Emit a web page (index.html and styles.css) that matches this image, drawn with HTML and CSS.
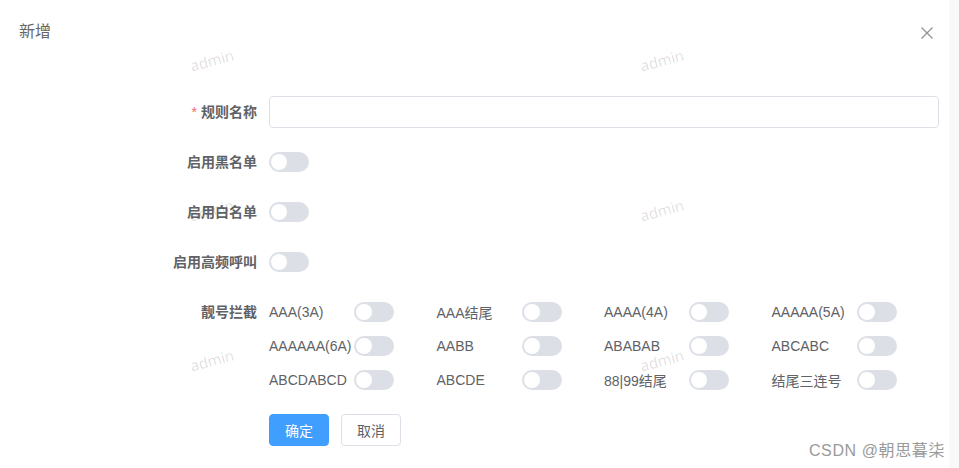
FILE: index.html
```html
<!DOCTYPE html>
<html lang="zh">
<head>
<meta charset="utf-8">
<title>新增</title>
<link rel="stylesheet" href="styles.css">
</head>
<body>
<div class="dialog">
  <div class="header">
    <span class="title">新增</span>
    <button class="close" aria-label="关闭">
      <svg width="12" height="12" viewBox="0 0 12 12"><path d="M0.5 0.5L11.5 11.5M11.5 0.5L0.5 11.5" stroke="#909399" stroke-width="1.3" fill="none"/></svg>
    </button>
  </div>
  <form class="form">
    <div class="item">
      <label class="label"><span class="req">*</span>规则名称</label>
      <div class="content"><input class="input" type="text"></div>
    </div>
    <div class="item">
      <label class="label">启用黑名单</label>
      <div class="content"><span class="switch"><span class="knob"></span></span></div>
    </div>
    <div class="item">
      <label class="label">启用白名单</label>
      <div class="content"><span class="switch"><span class="knob"></span></span></div>
    </div>
    <div class="item">
      <label class="label">启用高频呼叫</label>
      <div class="content"><span class="switch"><span class="knob"></span></span></div>
    </div>
    <div class="item">
      <label class="label">靓号拦截</label>
      <div class="content">
        <div class="grid">
          <div class="cell"><span class="ctext">AAA(3A)</span><span class="switch"><span class="knob"></span></span></div>
          <div class="cell"><span class="ctext">AAA结尾</span><span class="switch"><span class="knob"></span></span></div>
          <div class="cell"><span class="ctext">AAAA(4A)</span><span class="switch"><span class="knob"></span></span></div>
          <div class="cell"><span class="ctext">AAAAA(5A)</span><span class="switch"><span class="knob"></span></span></div>
          <div class="cell"><span class="ctext">AAAAAA(6A)</span><span class="switch"><span class="knob"></span></span></div>
          <div class="cell"><span class="ctext">AABB</span><span class="switch"><span class="knob"></span></span></div>
          <div class="cell"><span class="ctext">ABABAB</span><span class="switch"><span class="knob"></span></span></div>
          <div class="cell"><span class="ctext">ABCABC</span><span class="switch"><span class="knob"></span></span></div>
          <div class="cell"><span class="ctext">ABCDABCD</span><span class="switch"><span class="knob"></span></span></div>
          <div class="cell"><span class="ctext">ABCDE</span><span class="switch"><span class="knob"></span></span></div>
          <div class="cell"><span class="ctext">88|99结尾</span><span class="switch"><span class="knob"></span></span></div>
          <div class="cell"><span class="ctext">结尾三连号</span><span class="switch"><span class="knob"></span></span></div>
        </div>
      </div>
    </div>
    <div class="item">
      <span class="label"></span>
      <div class="content buttons">
        <button type="button" class="btn primary">确定</button>
        <button type="button" class="btn">取消</button>
      </div>
    </div>
  </form>
  <div class="watermarks" aria-hidden="true">
    <span class="wm">admin</span><span class="wm">admin</span>
    <span class="wm">admin</span><span class="wm">admin</span>
    <span class="wm">admin</span><span class="wm">admin</span>
  </div>
</div>
<div class="csdn">CSDN @朝思暮柒</div>
</body>
</html>
```
FILE: styles.css
```css
* { box-sizing: border-box; }
html, body { margin: 0; padding: 0; }
body {
  position: relative;
  background: #f9f9fa;
  font-family: "Liberation Sans", "Noto Sans CJK SC", sans-serif;
  width: 959px;
  height: 468px;
  overflow: hidden;
}
.dialog {
  position: relative;
  width: 949px;
  height: 468px;
  background: #fff;
  overflow: hidden;
}
.header {
  display: flex;
  justify-content: space-between;
  align-items: center;
  padding: 20px 16px 0 19px;
  height: 44px;
}
.title {
  font-size: 16px;
  color: #666;
  line-height: 24px;
}
.close {
  border: 0;
  background: none;
  padding: 0;
  width: 12px;
  height: 12px;
  display: flex;
  margin-top: 1px;
}
.form {
  padding: 52px 10px 0 0;
  display: flex;
  flex-direction: column;
  gap: 18px;
}
.item {
  display: flex;
  align-items: flex-start;
}
.label {
  width: 269px;
  flex: none;
  text-align: right;
  padding-right: 12px;
  font-size: 14px;
  font-weight: 700;
  color: #606266;
  line-height: 32px;
}
.req {
  color: #f56c6c;
  margin-right: 4px;
  font-weight: 400;
}
.content {
  flex: 1;
  min-height: 32px;
  display: flex;
  align-items: center;
}
.input {
  width: 100%;
  height: 32px;
  border: 1px solid #dcdfe6;
  border-radius: 4px;
  outline: none;
  padding: 0 12px;
}
.switch {
  display: inline-flex;
  align-items: center;
  width: 40px;
  height: 20px;
  border-radius: 10px;
  background: #dcdfe6;
  padding: 2px;
  flex: none;
}
.knob {
  width: 16px;
  height: 16px;
  border-radius: 50%;
  background: #fff;
}
.grid {
  width: 100%;
  display: grid;
  grid-template-columns: repeat(4, 1fr);
  row-gap: 2px;
}
.cell {
  display: flex;
  align-items: center;
  height: 32px;
}
.ctext {
  width: 85px;
  font-size: 14px;
  color: #606266;
  white-space: nowrap;
}
.buttons {
  gap: 12px;
}
.btn {
  width: 60px;
  height: 32px;
  border: 1px solid #dcdfe6;
  border-radius: 4px;
  background: #fff;
  color: #606266;
  font-size: 14px;
  font-family: inherit;
  padding: 0;
}
.btn.primary {
  background: #409eff;
  border-color: #409eff;
  color: #fff;
}
.watermarks {
  position: absolute;
  left: -13px;
  top: -15px;
  display: grid;
  grid-template-columns: repeat(2, 450px);
  grid-auto-rows: 150px;
  pointer-events: none;
}
.wm {
  display: flex;
  align-items: center;
  justify-content: center;
  font-family: "Open Sans", sans-serif;
  font-size: 15px;
  color: rgba(0, 0, 0, 0.14);
  transform: rotate(-15deg);
}
.csdn {
  position: absolute;
  right: 14px;
  bottom: 7px;
  font-size: 16px;
  color: #9a9a9a;
  letter-spacing: 0.6px;
}
```
